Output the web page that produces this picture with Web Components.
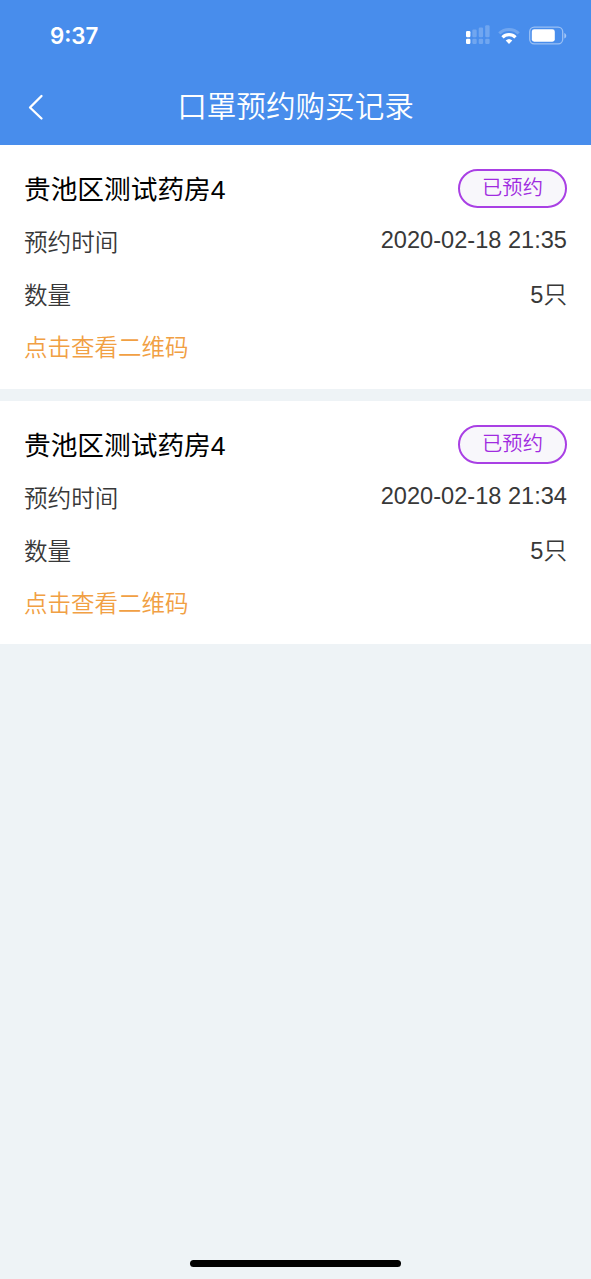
<!DOCTYPE html>
<html lang="zh-CN">
<head>
<meta charset="UTF-8">
<meta name="viewport" content="width=device-width, initial-scale=1">
<title>口罩预约购买记录</title>
<style>
  html, body { height: 100%; margin: 0; }
  body {
    background: #eef3f6;
    font-family: "Liberation Sans", "Noto Sans CJK SC", sans-serif;
    color: #333;
  }
</style>
</head>
<body>
<mask-page>
  <status-bar slot="top" time="9:37"></status-bar>
  <nav-header slot="top">口罩预约购买记录</nav-header>

  <record-card>
    <span slot="name">贵池区测试药房4</span>
    <state-badge slot="state">已预约</state-badge>
    <record-row label="预约时间" class="time">2020-02-18 21:35</record-row>
    <record-row label="数量">5只</record-row>
    <span slot="link">点击查看二维码</span>
  </record-card>

  <record-card>
    <span slot="name">贵池区测试药房4</span>
    <state-badge slot="state">已预约</state-badge>
    <record-row label="预约时间" class="time">2020-02-18 21:34</record-row>
    <record-row label="数量">5只</record-row>
    <span slot="link">点击查看二维码</span>
  </record-card>
</mask-page>

<script>
// Base: every element only has to give its styles and its markup
class BaseElement extends HTMLElement {
  constructor() {
    super();
    this.attachShadow({ mode: "open" });
  }

  connectedCallback() {
    const template = document.createElement("template");
    template.innerHTML = `<style>:host, * { box-sizing: border-box; }${this.getStyles()}</style>${this.getTemplate()}`;
    this.shadowRoot.replaceChildren(template.content.cloneNode(true));
  }
}

class MaskPage extends BaseElement {
  getStyles() {
    return `
      :host { display: flex; flex-direction: column; height: 1279px; overflow: hidden; }
      header { height: 145px; background: #488dec; color: #fff; }
      main { flex: 1; display: flex; flex-direction: column; gap: 12px; }
      footer { display: flex; justify-content: center; padding-bottom: 12px; }
      .home { width: 211px; height: 7px; border-radius: 4px; background: #000; }
    `;
  }
  getTemplate() {
    return `
      <header><slot name="top"></slot></header>
      <main><slot></slot></main>
      <footer><div class="home"></div></footer>
    `;
  }
}

class StatusBar extends BaseElement {
  getStyles() {
    return `
      :host { display: flex; justify-content: space-between; align-items: center; height: 69px; padding: 3px 24px 0 50px; }
      .time { font: 600 22.3px/28px Inter, sans-serif; }
      svg { display: block; }
    `;
  }
  getTemplate() {
    return `
      <span class="time">${this.getAttribute("time")}</span>
      <svg width="102" height="22" viewBox="465 25 102 22" fill="#fff">
        <!-- dual sim signal -->
        <rect x="466" y="31" width="4.4" height="6.3" rx="1.2"/>
        <rect x="466" y="38.8" width="4.4" height="5.2" rx="1.2"/>
        <g opacity=".22">
          <rect x="472.3" y="29.5" width="4.4" height="7.8" rx="1.2"/>
          <rect x="478.7" y="27.5" width="4.4" height="9.8" rx="1.2"/>
          <rect x="485.2" y="25.2" width="4.4" height="12.1" rx="1.2"/>
          <rect x="472.3" y="38.8" width="4.4" height="5.2" rx="1.2"/>
          <rect x="478.7" y="38.8" width="4.4" height="5.2" rx="1.2"/>
          <rect x="485.2" y="38.8" width="4.4" height="5.2" rx="1.2"/>
        </g>
        <!-- wifi -->
        <g fill="none" stroke="#fff" stroke-width="3.2">
          <path d="M499.3 33.4a14 14 0 0 1 19.4 0" opacity=".22"/>
          <path d="M502.5 37.4a9 9 0 0 1 13 0"/>
        </g>
        <path d="M505.7 40.6a4.8 4.8 0 0 1 6.6 0L509 44z"/>
        <!-- battery -->
        <rect x="529.7" y="27.2" width="33" height="16.6" rx="4.6" fill="none" stroke="#fff" stroke-width="1.3" opacity=".45"/>
        <rect x="531.8" y="29.3" width="23" height="12.4" rx="2.4"/>
        <path d="M564.3 33c2.6 1 2.6 4.6 0 5.6z" opacity=".5"/>
      </svg>
    `;
  }
}

class NavHeader extends BaseElement {
  getStyles() {
    return `
      :host { display: grid; grid-template-columns: 60px 1fr 60px; align-items: center; height: 76px; padding-bottom: 1px; }
      svg { display: block; margin-left: 27px; }
      h1 { margin: 0; text-align: center; font-size: 29.6px; line-height: 40px; font-weight: 350; white-space: nowrap; }
    `;
  }
  getTemplate() {
    return `
      <svg width="18" height="28" viewBox="0 0 18 28" fill="none" stroke="#fff" stroke-width="2.3" stroke-linecap="round" stroke-linejoin="round">
        <path d="M14.5 3L3 14.5l11.5 11"/>
      </svg>
      <h1><slot></slot></h1>
    `;
  }
}

class RecordCard extends BaseElement {
  getStyles() {
    return `
      :host { display: block; height: 243.5px; padding: 15px 24px 0; background: #fff; }
      .head { display: flex; justify-content: space-between; align-items: center; height: 57px; font-size: 26.7px; color: #000; }
      .name { padding-bottom: 2px; }
      .link { height: 53px; line-height: 51px; font-size: 23.5px; font-weight: 350; color: #f1a043; }
    `;
  }
  getTemplate() {
    return `
      <div class="head">
        <div class="name"><slot name="name"></slot></div>
        <slot name="state"></slot>
      </div>
      <slot></slot>
      <div class="link"><slot name="link"></slot></div>
    `;
  }
}

class RecordRow extends BaseElement {
  getStyles() {
    return `
      :host { display: flex; justify-content: space-between; height: 53px; line-height: 53px; font-size: 23.6px; font-weight: 350; color: #383838; }
      .value { line-height: 51px; }
      :host(.time) .value { line-height: 46px; }
    `;
  }
  getTemplate() {
    return `
      <span>${this.getAttribute("label")}</span>
      <span class="value"><slot></slot></span>
    `;
  }
}

class StateBadge extends BaseElement {
  getStyles() {
    return `
      :host {
        display: flex; justify-content: center; width: 109px; height: 39px;
        border: 2px solid #a940e4; border-radius: 20px; background: #f8f7fb;
        font-size: 20.3px; font-weight: 350; line-height: 35px; color: #a02be0;
      }
    `;
  }
  getTemplate() {
    return `<slot></slot>`;
  }
}

customElements.define("mask-page", MaskPage);
customElements.define("status-bar", StatusBar);
customElements.define("nav-header", NavHeader);
customElements.define("record-card", RecordCard);
customElements.define("record-row", RecordRow);
customElements.define("state-badge", StateBadge);
</script>
</body>
</html>
